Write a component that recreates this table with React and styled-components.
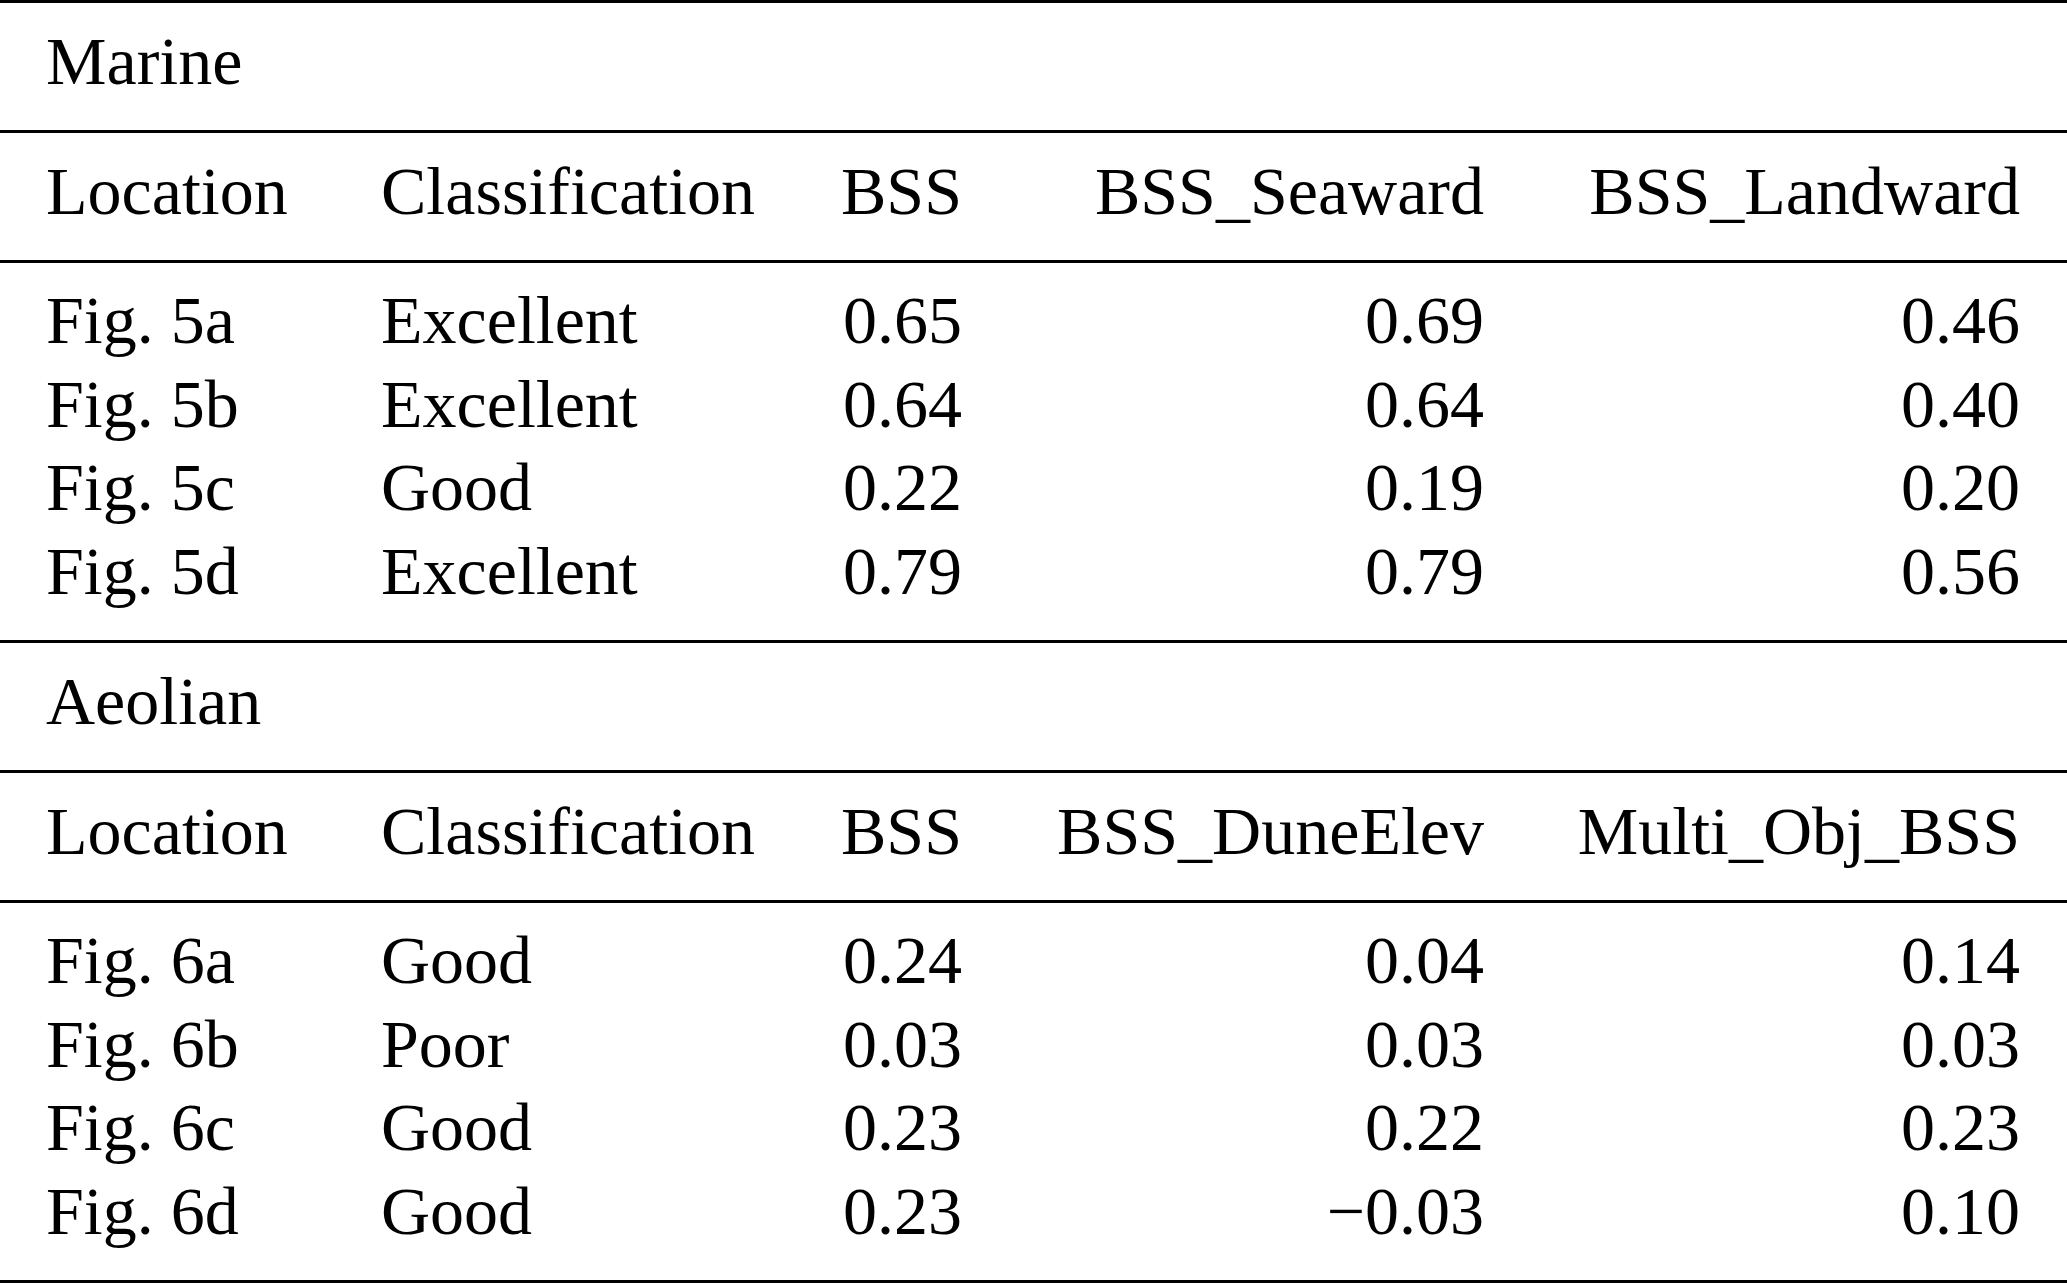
import React from "react";
import styled, { createGlobalStyle } from "styled-components";

const GlobalStyle = createGlobalStyle`
  html, body {
    margin: 0;
    padding: 0;
    background: #ffffff;
  }
  body {
    font-family: "Liberation Serif", "Times New Roman", serif;
    color: #000000;
  }
`;

const Table = styled.div`
  width: 2067px;
  border-bottom: 3px solid #000000;
  font-size: 68px;
`;

const Block = styled.div`
  border-top: 3px solid #000000;
  padding: 16px 47px 27px 46px;
`;

const SectionTitle = styled.div`
  line-height: 84px;
  white-space: nowrap;
`;

const Row = styled.div`
  display: grid;
  grid-template-columns: 335px 400px 181px 522px 536px;
  line-height: ${(p) => p.$lh}px;
`;

const Cell = styled.div`
  white-space: nowrap;
  text-align: ${(p) => (p.$right ? "right" : "left")};
`;

const groups = [
  {
    title: "Marine",
    headers: ["Location", "Classification", "BSS", "BSS_Seaward", "BSS_Landward"],
    rows: [
      ["Fig. 5a", "Excellent", "0.65", "0.69", "0.46"],
      ["Fig. 5b", "Excellent", "0.64", "0.64", "0.40"],
      ["Fig. 5c", "Good", "0.22", "0.19", "0.20"],
      ["Fig. 5d", "Excellent", "0.79", "0.79", "0.56"],
    ],
  },
  {
    title: "Aeolian",
    headers: ["Location", "Classification", "BSS", "BSS_DuneElev", "Multi_Obj_BSS"],
    rows: [
      ["Fig. 6a", "Good", "0.24", "0.04", "0.14"],
      ["Fig. 6b", "Poor", "0.03", "0.03", "0.03"],
      ["Fig. 6c", "Good", "0.23", "0.22", "0.23"],
      ["Fig. 6d", "Good", "0.23", "\u22120.03", "0.10"],
    ],
  },
];

function Cells({ values }) {
  return values.map((v, i) => (
    <Cell key={i} $right={i >= 2}>
      {v}
    </Cell>
  ));
}

export default function App() {
  return (
    <>
      <GlobalStyle />
      <Table>
        {groups.map((g) => (
          <React.Fragment key={g.title}>
            <Block>
              <SectionTitle>{g.title}</SectionTitle>
            </Block>
            <Block>
              <Row $lh={84}>
                <Cells values={g.headers} />
              </Row>
            </Block>
            <Block>
              {g.rows.map((r) => (
                <Row key={r[0]} $lh={83.5}>
                  <Cells values={r} />
                </Row>
              ))}
            </Block>
          </React.Fragment>
        ))}
      </Table>
    </>
  );
}
